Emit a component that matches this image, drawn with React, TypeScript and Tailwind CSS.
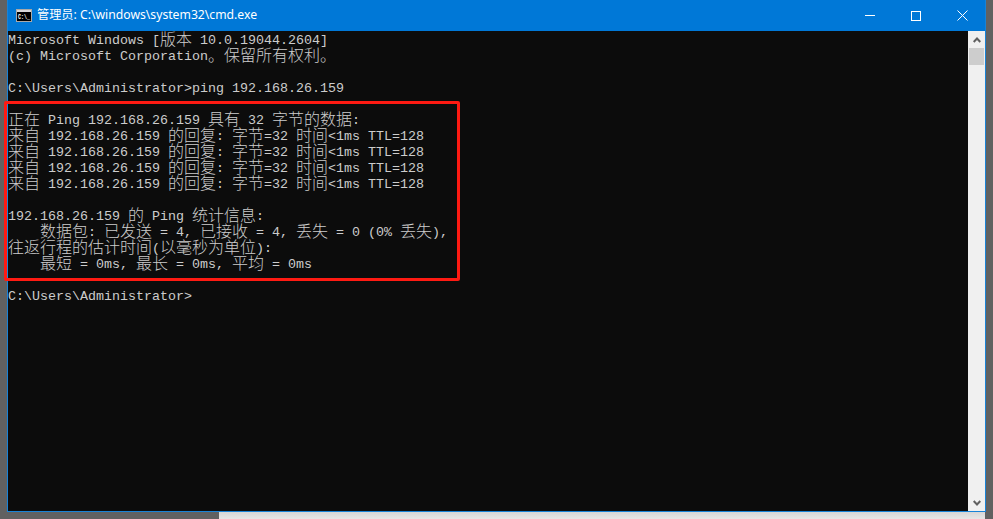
import React from 'react';

const CJK = /([\u3000-\u9fff\uff00-\uffef]+)/;

// cmd cells are 8px wide, CJK glyphs take two cells
const ConsoleLine = ({ text = '' }: { text?: string }) => (
  <div className="h-4 leading-4 whitespace-pre">
    {text.split(CJK).map((part, i) =>
      i % 2 === 1 ? (
        <span key={i} className="text-[16px] leading-[0] align-[-1px] font-light font-['Noto_Sans_CJK_SC',sans-serif]">
          {part}
        </span>
      ) : (
        <span key={i}>{part}</span>
      ),
    )}
  </div>
);

const CmdIcon = () => (
  <svg width="16" height="13" viewBox="0 0 16 13" className="shrink-0">
    <rect x="0.5" y="0.5" width="15" height="12" fill="#000" stroke="#a8a8a8" />
    <rect x="1" y="1" width="14" height="2" fill="#d8d8d8" />
    <text
      x="2"
      y="6.6"
      fontSize="5"
      fontWeight="700"
      fill="#fff"
      transform="scale(1 1.5)"
      fontFamily="Liberation Mono, monospace"
    >
      C:\_
    </text>
  </svg>
);

const App: React.FC = () => {
  return (
    <div className="h-[519px] w-[993px] overflow-hidden bg-[#616161] flex flex-col">
      <div className="ml-[7px] mr-[7px] h-[512px] border-x border-b border-[#1883d7] flex flex-col">
        {/* Title bar */}
        <div className="h-[31px] shrink-0 bg-[#0078d7] flex items-center text-white">
          <div className="ml-2 flex items-center gap-[5px]">
            <CmdIcon />
            <span className="text-[12.2px] font-['Noto_Sans','Noto_Sans_CJK_SC',sans-serif]">
              管理员: C:\windows\system32\cmd.exe
            </span>
          </div>
          <div className="ml-auto flex h-full">
            <button className="w-[46px] flex items-center justify-center">
              <span className="block w-2.5 h-px bg-white" />
            </button>
            <button className="w-[46px] flex items-center justify-center">
              <span className="block w-2.5 h-2.5 border border-white" />
            </button>
            <button className="w-[46px] flex items-center justify-center">
              <svg width="11" height="11" viewBox="0 0 11 11">
                <path d="M.5.5l10 10M10.5.5l-10 10" stroke="#fff" strokeWidth="1" />
              </svg>
            </button>
          </div>
        </div>

        <div className="flex-1 flex min-h-0">
          {/* Console output */}
          <div className="relative flex-1 bg-[#0c0c0c] pt-[2px] text-[#cccccc] text-[13.333px] font-['Liberation_Mono',monospace]">
            <ConsoleLine text="Microsoft Windows [版本 10.0.19044.2604]" />
            <ConsoleLine text="(c) Microsoft Corporation。保留所有权利。" />
            <ConsoleLine />
            <ConsoleLine text="C:\Users\Administrator>ping 192.168.26.159" />
            <ConsoleLine />
            <ConsoleLine text="正在 Ping 192.168.26.159 具有 32 字节的数据:" />
            <ConsoleLine text="来自 192.168.26.159 的回复: 字节=32 时间<1ms TTL=128" />
            <ConsoleLine text="来自 192.168.26.159 的回复: 字节=32 时间<1ms TTL=128" />
            <ConsoleLine text="来自 192.168.26.159 的回复: 字节=32 时间<1ms TTL=128" />
            <ConsoleLine text="来自 192.168.26.159 的回复: 字节=32 时间<1ms TTL=128" />
            <ConsoleLine />
            <ConsoleLine text="192.168.26.159 的 Ping 统计信息:" />
            <ConsoleLine text="    数据包: 已发送 = 4, 已接收 = 4, 丢失 = 0 (0% 丢失)," />
            <ConsoleLine text="往返行程的估计时间(以毫秒为单位):" />
            <ConsoleLine text="    最短 = 0ms, 最长 = 0ms, 平均 = 0ms" />
            <ConsoleLine />
            <ConsoleLine text="C:\Users\Administrator>" />
            {/* Red annotation box */}
            <div className="absolute left-[-4px] top-[70px] w-[456px] h-[180px] border-[3px] border-[#ff1a12] rounded-[2px]" />
          </div>

          {/* Scrollbar */}
          <div className="w-[17px] shrink-0 bg-[#f0f0f0] flex flex-col items-center">
            <div className="h-[17px] w-full flex items-center justify-center">
              <svg width="8" height="6" viewBox="0 0 8 6">
                <path d="M.7 5L4 1.5 7.3 5" stroke="#606060" strokeWidth="2" fill="none" />
              </svg>
            </div>
            <div className="h-[17px] w-[15px] bg-[#cdcdcd]" />
            <div className="mt-auto h-[17px] w-full flex items-center justify-center">
              <svg width="8" height="6" viewBox="0 0 8 6">
                <path d="M.7 1L4 4.5 7.3 1" stroke="#606060" strokeWidth="2" fill="none" />
              </svg>
            </div>
          </div>
        </div>
      </div>
      {/* Strip of whatever sits behind the window */}
      <div className="h-[7px] ml-[219px] mr-[8px] bg-gradient-to-b from-[#d6d6d6] to-[#e6e6e6]" />
    </div>
  );
};

export default App;
